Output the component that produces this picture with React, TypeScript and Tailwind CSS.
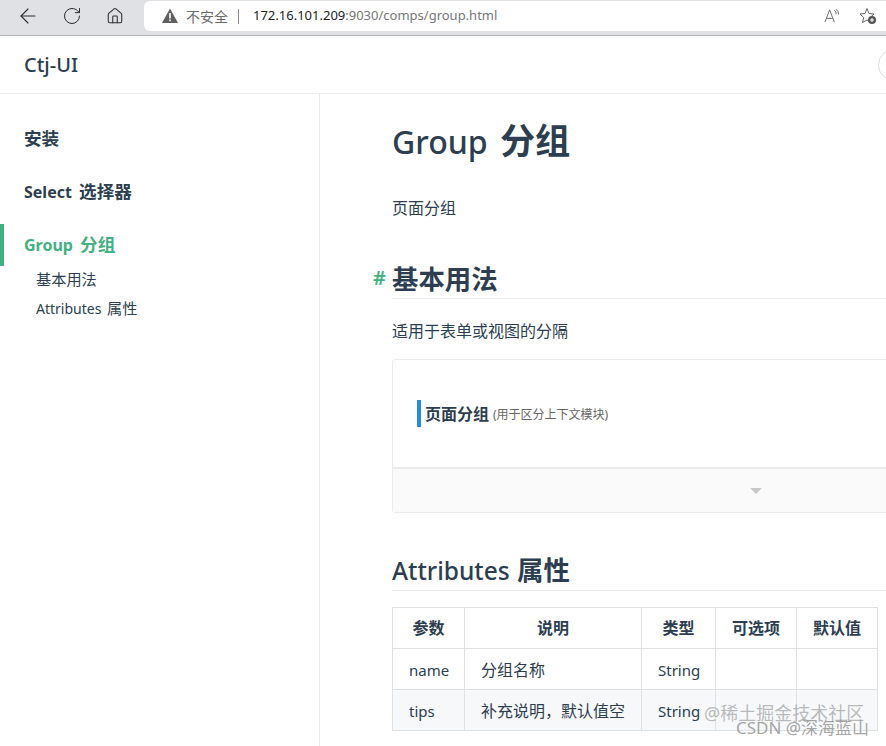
import { ArrowLeft, Home, RotateCw } from 'lucide-react'

const font = { fontFamily: '"Noto Sans", "Noto Sans CJK SC", sans-serif' }

const rows = [
  { name: 'name', desc: '分组名称', type: 'String', alt: false },
  { name: 'tips', desc: '补充说明，默认值空', type: 'String', alt: true },
]

function Toolbar() {
  return (
    <div className="flex h-[36px] shrink-0 items-center border-b border-[#b4b4b4] bg-[#dfe1e5]">
      <ArrowLeft className="ml-[16px] mb-[3px] h-[24px] w-[24px] text-[#2c2c2c]" strokeWidth={1.1} />
      <RotateCw className="ml-[22px] mb-[3px] h-[20px] w-[20px] text-[#2c2c2c]" strokeWidth={1.2} />
      <Home className="ml-[24px] mb-[3px] h-[18px] w-[18px] text-[#2c2c2c]" strokeWidth={1.4} />
      <div className="mb-[3px] ml-[20px] flex h-[30px] flex-1 items-center rounded-l-[6px] bg-white pl-[18px] text-[13px]">
        <svg className="h-[16px] w-[16px]" viewBox="0 0 16 16">
          <path d="M8 0.5 L16 15 H0 Z" fill="#5f5f5f" />
          <rect x="7.2" y="5" width="1.6" height="5.5" fill="#fff" />
          <rect x="7.2" y="11.5" width="1.6" height="1.7" fill="#fff" />
        </svg>
        <span className="ml-[8px] text-[14px] text-[#6a6a6a]">不安全</span>
        <span className="ml-[10px] h-[15px] w-px bg-[#8a8a8a]" />
        <span className="ml-[14px] text-[#222]">172.16.101.209</span>
        <span className="text-[#777]">:9030/comps/group.html</span>
        <span className="ml-auto flex items-center">
          <svg className="h-[16px] w-[16px]" viewBox="0 0 17 17" fill="none" stroke="#666" strokeWidth="1">
            <path d="M1 15 L6 2 L11 15 M2.8 11 H9.2" />
            <path d="M11 2.5 Q13 4 13 6.5 M13 1.5 Q15.5 3.5 15.5 7" />
          </svg>
          <svg className="ml-[19px] mr-[9px] h-[18px] w-[18px]" viewBox="0 0 18 18" fill="none">
            <path d="M8 1.5 L10 6.5 L15 7 L11.2 10.5 L12 15.5 L8 13 L3.5 15.5 L4.7 10.5 L1 7 L6 6.5 Z" stroke="#666" strokeWidth="1" />
            <circle cx="13" cy="13" r="4" fill="#555" />
            <path d="M13 11 V15 M11 13 H15" stroke="#fff" strokeWidth="1.1" />
          </svg>
        </span>
      </div>
    </div>
  )
}

function Sidebar() {
  return (
    <aside className="w-[320px] shrink-0 border-r border-[#eaecef] pt-[29px]">
      <div className="pl-[24px] text-[17.6px] leading-[30px] font-bold text-[#2c3e50]">安装</div>
      <div className="mt-[23px] pl-[24px] text-[16px] leading-[30px] font-bold text-[#2c3e50]">
        Select <span className="ml-[3px] text-[17.6px]">选择器</span>
      </div>
      <div className="mt-[17px] border-l-[4px] border-[#42b080] pl-[20px] text-[16px] leading-[41px] font-bold text-[#42b080]">
        Group <span className="ml-[3px] text-[17.6px]">分组</span>
      </div>
      <div className="mt-[-1px] pl-[36px] text-[14px] leading-[29px] text-[#2c3e50]">
        <div className="text-[15.2px]">基本用法</div>
        <div>
          Attributes <span className="ml-[2px] text-[15.2px]">属性</span>
        </div>
      </div>
    </aside>
  )
}

function DemoCard() {
  return (
    <div className="mt-[15px] w-[700px] rounded-[3px] border border-[#ebebeb]">
      <div className="flex h-[107px] items-center pl-[24px]">
        <div className="flex h-[27px] items-center border-l-[4px] border-[#2589e6] pl-[4px]">
          <span className="text-[16px] font-bold text-[#2c3e50]">页面分组</span>
          <span className="ml-[4px] mt-[2px] text-[12px] text-[#666]">(用于区分上下文模块)</span>
        </div>
      </div>
      <div className="flex h-[45px] items-center border-t-2 border-[#ebebeb] bg-[#fafafa] pl-[357px]">
        <span className="h-0 w-0 border-x-[6px] border-t-[6px] border-x-transparent border-t-[#c8c8c8]" />
      </div>
    </div>
  )
}

function AttrTable() {
  const th = 'border border-[#dfe2e5] text-[16px] font-bold text-[#2c3e50] h-[41px]'
  const td = 'border border-[#dfe2e5] px-[16px] pt-[2px] h-[41px] text-[#2c3e50]'
  return (
    <table className="mt-[16px] w-[485px] table-fixed border-collapse text-[15px]">
      <colgroup>
        <col className="w-[72px]" />
        <col className="w-[177px]" />
        <col className="w-[74px]" />
        <col className="w-[81px]" />
        <col className="w-[81px]" />
      </colgroup>
      <thead>
        <tr>
          <th className={th}>参数</th>
          <th className={th}>说明</th>
          <th className={th}>类型</th>
          <th className={th}>可选项</th>
          <th className={th}>默认值</th>
        </tr>
      </thead>
      <tbody>
        {rows.map((r) => (
          <tr key={r.name} className={r.alt ? 'bg-[#f6f8fa]' : ''}>
            <td className={td}>{r.name}</td>
            <td className={td + ' whitespace-nowrap text-[16px]'}>{r.desc}</td>
            <td className={td}>{r.type}</td>
            <td className={td}></td>
            <td className={td}></td>
          </tr>
        ))}
      </tbody>
    </table>
  )
}

export default function App() {
  return (
    <div className="relative flex h-[746px] w-[886px] flex-col overflow-hidden bg-white" style={font}>
      <Toolbar />
      {/* Site header */}
      <header className="flex h-[58px] shrink-0 items-center border-b border-[#eaecef] pl-[24px]">
        <span className="text-[20px] font-medium text-[#2c3e50]">Ctj-UI</span>
        <span className="ml-auto mr-[-24px] h-[32px] w-[32px] rounded-full border border-[#dfdfdf]" />
      </header>

      <div className="flex flex-1">
        <Sidebar />
        <main className="min-w-0 flex-1 pl-[72px] text-[#2c3e50]">
          <h1 className="mt-[22px] text-[32px] leading-[48px] font-medium">
            Group <span className="ml-[4px] text-[35.2px] font-bold">分组</span>
          </h1>
          <p className="mt-[29px] text-[16px] leading-[26px]">页面分组</p>
          <div className="relative mt-[40px] w-[700px] border-b border-[#eaecef] pb-[1px]">
            <span className="absolute left-[-19px] top-[2px] text-[20px] font-semibold text-[#42b080]">#</span>
            <h2 className="text-[26.4px] leading-[36px] font-semibold">基本用法</h2>
          </div>
          <p className="mt-[19px] text-[16px] leading-[26px]">适用于表单或视图的分隔</p>
          <DemoCard />
          <h2 className="mt-[39px] w-[700px] border-b border-[#eaecef] pb-[1px] text-[24.5px] leading-[36px] font-medium">
            Attributes <span className="ml-[1px] text-[26.4px] font-semibold">属性</span>
          </h2>
          <AttrTable />
        </main>
      </div>

      {/* Watermarks */}
      <div className="absolute left-[704px] top-[701px] text-[18px] leading-[24px] text-[#8f8f8f]/60">@稀土掘金技术社区</div>
      <div className="absolute left-[736px] top-[716px] text-[17px] leading-[24px] text-[#8f8f8f]/80">CSDN @深海蓝山</div>
    </div>
  )
}
